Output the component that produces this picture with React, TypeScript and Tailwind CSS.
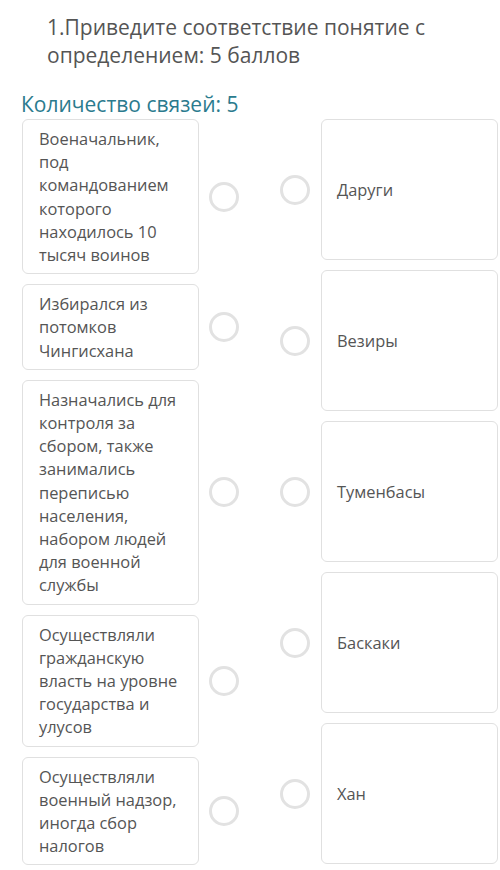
const leftItems = [
  'Военачальник, под командованием которого находилось 10 тысяч воинов',
  'Избирался из потомков Чингисхана',
  'Назначались для контроля за сбором, также занимались переписью населения, набором людей для военной службы',
  'Осуществляли гражданскую власть на уровне государства и улусов',
  'Осуществляли военный надзор, иногда сбор налогов',
];

const rightItems = ['Даруги', 'Везиры', 'Туменбасы', 'Баскаки', 'Хан'];

const Dot = () => (
  <div className="w-[30px] h-[30px] shrink-0 rounded-full border-[3px] border-[#e2e2e2] bg-white" />
);

export default function App() {
  return (
    <div
      className="w-[500px] h-[870px] bg-white overflow-hidden text-[#555]"
      style={{ fontFamily: '"Open Sans", "Liberation Sans", sans-serif' }}
    >
      <h1 className="pl-[47px] pt-[13px] text-[21px] leading-[28px] font-normal text-[#555]">
        1.Приведите соответствие понятие с определением: 5 баллов
      </h1>

      <div className="pl-[21px] mt-[22px] text-[21px] leading-[26px] text-[#2b7b8e]">
        Количество связей: 5
      </div>

      <div className="flex pl-[22px] mt-[2px]">
        <div className="flex flex-col gap-[10px] w-[258px]">
          {leftItems.map((t) => (
            <div key={t} className="flex items-center">
              <div className="w-[177px] shrink-0 rounded-[6px] border border-[#e0e0e0] pl-[16px] pr-[10px] py-[7px] text-[16.4px] leading-[23.2px]">
                {t}
              </div>
              <div className="ml-[10px]">
                <Dot />
              </div>
            </div>
          ))}
        </div>
        <div className="flex flex-col gap-[10px]">
          {rightItems.map((t) => (
            <div key={t} className="flex items-center">
              <Dot />
              <div className="ml-[11px] w-[177px] h-[141px] shrink-0 flex items-center rounded-[6px] border border-[#e0e0e0] pl-[15px] text-[16.4px] leading-[23px]">
                {t}
              </div>
            </div>
          ))}
        </div>
      </div>
    </div>
  );
}
